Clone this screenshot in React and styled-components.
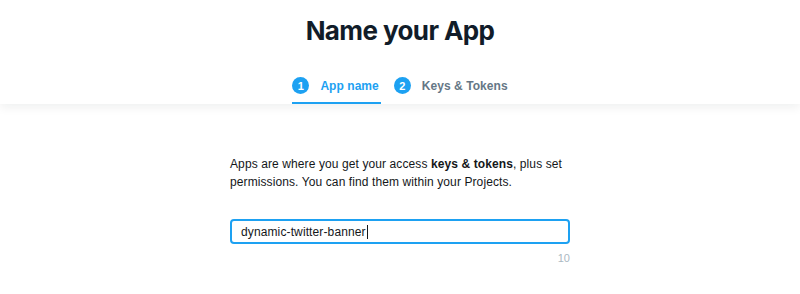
import React from "react";
import styled, { createGlobalStyle } from "styled-components";

const Global = createGlobalStyle`
  html, body { margin: 0; padding: 0; background: #ffffff; }
  body { font-family: "Liberation Sans", Arial, Helvetica, sans-serif; -webkit-font-smoothing: antialiased; }
`;

const Page = styled.div`
  width: 800px;
  min-height: 294px;
  background: #ffffff;
`;

const Header = styled.header`
  display: flex;
  flex-direction: column;
  align-items: center;
  padding-top: 15px;
  height: 104px;
  box-sizing: border-box;
  background: #ffffff;
  box-shadow: 0 3px 10px rgba(20, 23, 26, 0.07);
  position: relative;
  z-index: 1;
`;

const Title = styled.h1`
  margin: 0;
  font-family: Inter, "Liberation Sans", Arial, sans-serif;
  font-size: 26px;
  line-height: 32px;
  font-weight: 700;
  color: #111c29;
  letter-spacing: -0.6px;
`;

const Tabs = styled.nav`
  display: flex;
  gap: 13px;
  margin-top: 30px;
`;

const Tab = styled.div`
  display: flex;
  align-items: center;
  gap: 11px;
  height: 17px;
  padding-bottom: 8px;
  border-bottom: 2px solid ${(p) => (p.$active ? "#1da1f2" : "transparent")};
  font-size: 12px;
  font-weight: 700;
  letter-spacing: 0.05px;
  color: ${(p) => (p.$active ? "#1da1f2" : "#657786")};
  padding-right: ${(p) => (p.$active ? "2px" : "0")};
`;

const Step = styled.span`
  width: 17px;
  height: 17px;
  border-radius: 50%;
  background: #1da1f2;
  color: #ffffff;
  font-size: 11px;
  font-weight: 700;
  display: flex;
  align-items: center;
  justify-content: center;
`;

const Content = styled.main`
  width: 340px;
  margin: 0 auto;
  padding-top: 51px;
`;

const Intro = styled.p`
  margin: 0;
  font-size: 12px;
  line-height: 18px;
  letter-spacing: 0.1px;
  color: #14171a;
  strong { font-weight: 700; }
`;

const Field = styled.div`
  margin-top: 28px;
  height: 25px;
  box-sizing: border-box;
  border: 2px solid #1da1f2;
  border-radius: 4px;
  display: flex;
  align-items: center;
  padding-left: 9px;
  font-size: 12px;
  letter-spacing: 0.12px;
  color: #14171a;
`;

const Caret = styled.span`
  display: inline-block;
  width: 1px;
  height: 14px;
  margin-left: 1px;
  background: #14171a;
`;

const Counter = styled.div`
  margin-top: 8px;
  text-align: right;
  font-size: 11px;
  line-height: 13px;
  color: #aab8c2;
`;

export default function App() {
  return (
    <Page>
      <Global />
      <Header>
        <Title>Name your App</Title>
        <Tabs>
          <Tab $active>
            <Step>1</Step>
            App name
          </Tab>
          <Tab>
            <Step>2</Step>
            Keys &amp; Tokens
          </Tab>
        </Tabs>
      </Header>
      <Content>
        <Intro>
          Apps are where you get your access <strong>keys &amp; tokens</strong>, plus set
          permissions. You can find them within your Projects.
        </Intro>
        <Field>
          dynamic-twitter-banner
          <Caret />
        </Field>
        <Counter>10</Counter>
      </Content>
    </Page>
  );
}
